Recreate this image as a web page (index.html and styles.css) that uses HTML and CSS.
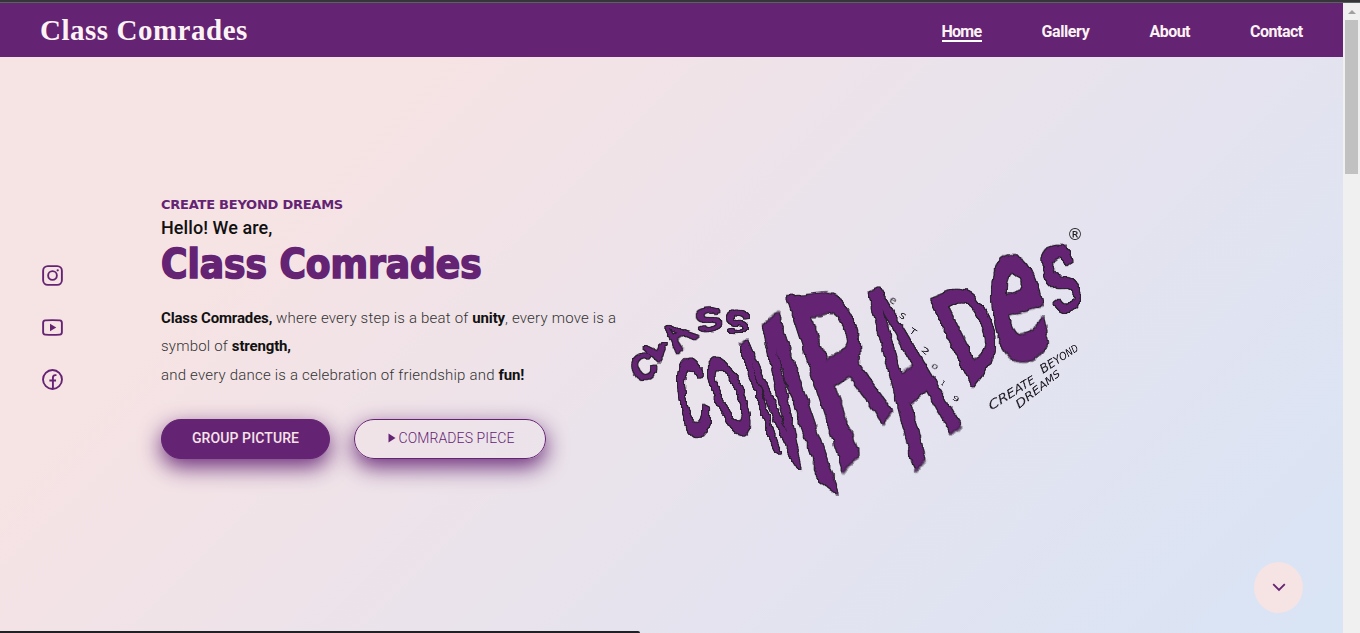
FILE: index.html
```html
<!DOCTYPE html>
<html lang="en">
<head>
<meta charset="utf-8">
<title>Class Comrades</title>
<link rel="stylesheet" href="styles.css">
</head>
<body>
<div class="edge"></div>
<div class="window">
  <div class="page">
    <header class="header">
      <a class="brand">Class Comrades</a>
      <nav class="nav">
        <a class="nav-link active nav-home">Home</a>
        <a class="nav-link nav-gallery">Gallery</a>
        <a class="nav-link nav-about">About</a>
        <a class="nav-link nav-contact">Contact</a>
      </nav>
    </header>
    <main class="hero">
      <div class="social">
        <svg viewBox="0 0 24 24"><rect x="3" y="3" width="18" height="18" rx="4.5"/><circle cx="12" cy="12" r="4.2"/><circle class="solid" cx="17" cy="7" r="1.1"/></svg>
        <svg viewBox="0 0 24 24"><path d="M5 5.2Q12 4.6 19 5.2Q21 5.4 21 7.4V16.6Q21 18.6 19 18.8Q12 19.4 5 18.8Q3 18.6 3 16.6V7.4Q3 5.4 5 5.2Z"/><path class="solid" d="M9.6 8.5L15.6 12L9.6 15.5Z"/></svg>
        <svg viewBox="0 0 24 24"><circle cx="12" cy="12" r="9.1"/><path d="M12.4 21V10.3Q12.4 7.8 14.6 7.8H15.8M9 13H15.4"/></svg>
      </div>
      <section class="intro">
        <h3 class="motto"><span>CREATE BEYOND DREAMS</span></h3>
        <p class="hello">Hello! We are,</p>
        <h1 class="title">Class Comrades</h1>
        <p class="copy"><b>Class Comrades,</b> where every step is a beat of <b>unity</b>, every move is a<br>symbol of <b>strength,</b><br>and every dance is a celebration of friendship and <b>fun!</b></p>
        <div class="actions">
          <a class="btn btn-solid">GROUP PICTURE</a>
          <a class="btn btn-line"><svg viewBox="0 0 8 10"><path d="M.5 .5L7.5 5L.5 9.5Z"/></svg><span>COMRADES PIECE</span></a>
        </div>
      </section>
      <div class="logo" id="logo"></div>
      <a class="down"><svg viewBox="0 0 14 9"><path d="M1.2 1.2L7 7L12.8 1.2"/></svg></a>
    </main>
  </div>
  <div class="scrollbar"><i class="arrow"></i><i class="thumb"></i></div>
</div>
<div class="status"></div>
<svg class="defs" width="0" height="0">
  <filter id="brush" x="-5%" y="-5%" width="110%" height="110%" color-interpolation-filters="sRGB">
    <feTurbulence type="fractalNoise" baseFrequency="0.09" numOctaves="3" seed="8" result="n"/>
    <feDisplacementMap in="SourceGraphic" in2="n" scale="6" xChannelSelector="R" yChannelSelector="G" result="d"/>
    <feMorphology in="d" operator="dilate" radius="0.5" result="o"/>
    <feFlood flood-color="#2a2030"/>
    <feComposite in2="o" operator="in" result="k"/>
    <feMerge><feMergeNode in="k"/><feMergeNode in="d"/></feMerge>
  </filter>
  <filter id="brush-fine" x="-5%" y="-5%" width="110%" height="110%" color-interpolation-filters="sRGB">
    <feTurbulence type="fractalNoise" baseFrequency="0.15" numOctaves="2" seed="3" result="n"/>
    <feDisplacementMap in="SourceGraphic" in2="n" scale="3" xChannelSelector="R" yChannelSelector="G" result="d"/>
    <feMorphology in="d" operator="dilate" radius="0.5" result="o"/>
    <feFlood flood-color="#2a2030"/>
    <feComposite in2="o" operator="in" result="k"/>
    <feMerge><feMergeNode in="k"/><feMergeNode in="d"/></feMerge>
  </filter>
</svg>
<script src="logo.js"></script>
</body>
</html>
```
FILE: styles.css
```css
* { box-sizing: border-box; margin: 0; padding: 0; }
body {
  width: 1360px; height: 633px; overflow: hidden; position: relative;
  font-family: Roboto, "Liberation Sans", sans-serif;
}
.edge { height: 3px; background: #35353a; border-bottom: 1px solid #59635d; }
.window { display: flex; height: 630px; }
.page { flex: 1; background: linear-gradient(135deg, #f6e3e4 25%, #e6e3ee 63%, #d9e4f5 98%); }
.header {
  height: 54px; background: #642373; padding: 0 40px;
  display: flex; justify-content: space-between; align-items: center;
}
.brand { font: bold 29px/34px "Liberation Serif", serif; color: #fdf3f4; letter-spacing: .52px; }
.nav { display: flex; gap: 60px; padding-top: 5px; }
.nav-link { color: #fdf3f4; font-size: 16px; line-height: 17px; font-weight: 700; border-bottom: 2px solid transparent; white-space: nowrap; }
.nav-home { width: 40px; letter-spacing: -.75px; }
.nav-gallery { width: 48px; letter-spacing: -.4px; }
.nav-about { width: 40.5px; letter-spacing: -.55px; }
.nav-contact { width: 53px; letter-spacing: -.5px; }
.active { border-color: #fff; }
.hero { display: flex; height: 576px; position: relative; }
.social { width: 161px; padding: 206px 0 0 40px; display: flex; flex-direction: column; gap: 27px; }
.social svg { width: 25px; height: 25px; fill: none; stroke: #642373; stroke-width: 1.8; }
.social .solid { fill: #642373; stroke: none; }
.intro { width: 469px; padding-top: 138px; flex: none; white-space: nowrap; }
.motto { font: bold 13px/19px "DejaVu Sans", sans-serif; color: #642373; letter-spacing: -.24px; }
.hello { font-size: 18px; line-height: 28px; color: #111; font-weight: 500; letter-spacing: .08px; }
.title { font: bold 40px/44px "DejaVu Sans Condensed", "DejaVu Sans", sans-serif; font-stretch: condensed; color: #642373; -webkit-text-stroke: 1.6px #642373; }
.copy { margin-top: 18px; font-size: 15px; line-height: 28.4px; color: #333; font-weight: 300; letter-spacing: .2px; }
.copy b { color: #111; font-weight: 700; letter-spacing: -.15px; }
.actions { display: flex; gap: 24px; margin-top: 29.3px; }
.btn {
  height: 40px; border-radius: 20px; border: 1px solid #642373; font-size: 14px; padding-bottom: 1px;
  display: flex; align-items: center; justify-content: center; color: #642373;
  box-shadow: 0 8px 22px #642373f0;
}
.btn-solid { width: 169px; background: #642373; color: #f6e3e8; font-weight: 500; letter-spacing: .1px; }
.btn-line { width: 192px; gap: 3px; font-weight: 300; letter-spacing: .1px; padding-left: 2px; }
.btn svg { width: 8px; height: 10px; fill: #642373; }
.logo { position: relative; width: 480px; height: 300px; margin-top: 160px; flex: none; }
.strokes { position: absolute; inset: 0; color: #642373; }
.rough { filter: url(#brush); }
.fine { filter: url(#brush-fine); }
.glyph { position: absolute; left: 0; top: 0; transform-origin: 0 0; white-space: pre; }
.ink { color: #1b151f; }
.registered { position: absolute; left: 437px; top: 9px; font: 16px/18px "DejaVu Sans", sans-serif; color: #222; }
.down {
  position: absolute; left: 1254px; top: 505px; width: 49px; height: 51px; border-radius: 50%;
  background: #f6e3e4; display: flex; align-items: center; justify-content: center;
}
.down svg { width: 14px; height: 9px; fill: none; stroke: #642373; stroke-width: 1.8; }
.scrollbar { width: 17px; background: #f0f0f0; display: flex; flex-direction: column; align-items: center; }
.arrow { margin-top: 7px; border: 4px solid transparent; border-top: 0; border-bottom: 4px solid #a0a0a0; }
.thumb { width: 13px; height: 154px; margin-top: 6px; background: #c1c1c1; }
.status { position: absolute; left: 0; bottom: 0; width: 640px; height: 2px; background: #202025; border-top-right-radius: 3px; }
.defs { position: absolute; }
```
FILE: logo.js
```js
// Each item: text, font, then page corners: top-left, top-right, bottom-right, bottom-left.
const SANS = "Liberation Sans", WIDE = "DejaVu Sans";
const small = [
  ["C", "700", SANS, 628,360, 648,350, 660,372, 640,386],
  ["L", "700", SANS, 643,348, 651,342, 667,343, 659,363],
  ["A", "700", SANS, 661,330, 672,323, 699,336, 677,354],
  ["S", "700", SANS, 692,309, 720,307, 722,328, 700,334],
  ["S", "700", SANS, 723,309, 751,312, 747,332, 728,335]
];
const lettering = [
  ["C", "700", SANS, 674,363, 699,355, 714,431, 686,443],
  ["O", "700", SANS, 702,365, 725,352, 759,426, 733,442],
  ["M", "700", SANS, 740,345, 777,312, 838,494, 774,450],
  ["R", "700", SANS, 787,297, 844,291, 893,412, 844,474],
  ["A", "700", SANS, 852,299, 893,281, 961,426, 915,473],
  ["D", "700", SANS, 930,299, 970,283, 1004,346, 972,387],
  ["e", "700", WIDE, 987,262, 1030,251, 1053,353, 1000,370],
  ["S", "700", SANS, 1034,250, 1070,240, 1082,305, 1058,318]
];
const notes = [
  ["e", "400", WIDE, 892,297, 897,300, 894,305, 889,302],
  ["S", "400", WIDE, 902,312, 907,315, 903,320, 899,317],
  ["T", "400", WIDE, 912,327, 918,331, 914,336, 909,332],
  ["2", "400", WIDE, 924,346, 930,350, 926,355, 921,351],
  ["0", "400", WIDE, 934,363, 939,366, 936,370, 931,367],
  ["1", "400", WIDE, 943,380, 946,382, 943,386, 941,384],
  ["9", "400", WIDE, 955,395, 960,398, 957,403, 952,399],
  ["CREATE", "italic 400", WIDE, 987,402, 1032,375, 1036,382, 991,411],
  ["BEYOND", "italic 400", WIDE, 1038,366, 1075,344, 1079,350, 1043,374],
  ["DREAMS", "italic 400", WIDE, 1014,402, 1057,369, 1061,375, 1019,409]
];
const logo = document.getElementById("logo");
const pen = document.createElement("canvas").getContext("2d");
const LEFT = 630, TOP = 217;

// Projective map from the unit square to four corners.
function project(q) {
  const [x0,y0,x1,y1,x2,y2,x3,y3] = q;
  const sx = x0-x1+x2-x3, sy = y0-y1+y2-y3;
  const dx1 = x1-x2, dx2 = x3-x2, dy1 = y1-y2, dy2 = y3-y2;
  const det = dx1*dy2-dx2*dy1;
  const g = (sx*dy2-dx2*sy)/det, h = (dx1*sy-sx*dy1)/det;
  return [x1-x0+g*x1, x3-x0+h*x3, x0, y1-y0+g*y1, y3-y0+h*y3, y0, g, h];
}
function paint(items, className, size) {
  const layer = document.createElement("div");
  layer.className = className;
  logo.append(layer);
  for (const [text, weight, family, ...corners] of items) {
    const el = document.createElement("span");
    el.className = "glyph";
    el.textContent = text;
    const font = `${weight} ${size}px "${family}"`;
    el.style.font = font;
    layer.append(el);
    pen.font = font;
    const m = pen.measureText(text);
    const w = m.actualBoundingBoxLeft + m.actualBoundingBoxRight;
    const h = m.actualBoundingBoxAscent + m.actualBoundingBoxDescent;
    const ox = -m.actualBoundingBoxLeft;
    // The line box starts exactly at the top of the ink.
    el.style.lineHeight = `${2*m.actualBoundingBoxAscent - m.fontBoundingBoxAscent + m.fontBoundingBoxDescent}px`;
    const [a,b,c,d,e,f,g,k] = project(corners.map((v,i) => v - (i % 2 ? TOP : LEFT)));
    el.style.transform = `matrix3d(${a/w},${d/w},0,${g/w},${b/h},${e/h},0,${k/h},0,0,1,0,${c},${f},0,1) translate(${-ox}px,0)`;
  }
}
paint(small, "strokes fine", 60);
paint(lettering, "strokes rough", 150);
paint(notes, "strokes ink", 20);
const mark = document.createElement("span");
mark.className = "registered";
mark.textContent = "®";
logo.append(mark);
```
